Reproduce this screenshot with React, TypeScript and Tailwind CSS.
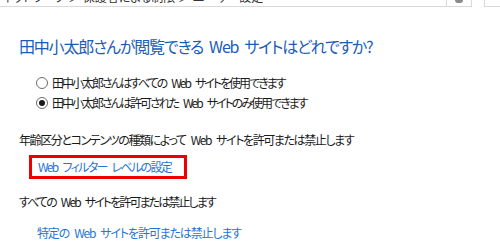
import React from 'react';

const jp = "font-['Noto_Sans_CJK_JP','Noto_Sans',sans-serif] [font-feature-settings:'palt']";

// keeps the word gaps around "Web" open while the glyphs are set tight
function Words({ text, gap = 'w-[5px]' }: { text: string; gap?: string }) {
  const parts = text.split(' ');
  return (
    <>
      {parts.map((p, i) => (
        <React.Fragment key={i}>
          {i > 0 && <span className={`inline-block ${gap}`} />}
          {p}
        </React.Fragment>
      ))}
    </>
  );
}

function Radio({ checked, label }: { checked?: boolean; label: string }) {
  return (
    <label className="flex items-center h-5 text-[12px] text-[#1a1a1a]">
      <span className="w-[12px] h-[12px] rounded-full border border-[#6b6b6b] bg-white flex items-center justify-center mr-[4px]">
        {checked && <span className="w-[6px] h-[6px] rounded-full bg-[#1a1a1a]" />}
      </span>
      <span className="leading-5 tracking-[-2px] whitespace-nowrap"><Words text={label} /></span>
    </label>
  );
}

export default function App() {
  return (
    <div className={`w-[500px] h-[250px] bg-white overflow-hidden ${jp}`}>
      {/* address bar, cut off at the top */}
      <div className="flex h-[7px]">
        <div className="w-[447px] h-[7px] border-b border-r border-[#d9d9d9] overflow-hidden">
          <div className="-mt-[11px] pl-[2px] text-[12px] leading-[16px] text-[#333] whitespace-nowrap">
            ネットワーク ＞  保護者による制限 ＞  ユーザー設定
          </div>
        </div>
        <div className="w-[25px] h-[7px] border-b border-r border-[#d9d9d9] flex justify-center">
          <span className="w-[8px] h-[3px] rounded-b-full bg-[#8a8a8a]" />
        </div>
        <div className="ml-[12px] flex-1 h-[7px] border-b border-l border-[#d9d9d9]" />
      </div>

      <div className="pl-[19px]">
        <h1 className="mt-[27px] text-[16px] leading-6 tracking-[-1.2px] text-[#1a5cb8] font-normal whitespace-nowrap">
          <Words text="田中小太郎さんが閲覧できる Web サイトはどれですか?" gap="w-[6px]" />
        </h1>

        <div className="mt-[15px] pl-[17px]">
          <Radio label="田中小太郎さんはすべての Web サイトを使用できます" />
          <Radio checked label="田中小太郎さんは許可された Web サイトのみ使用できます" />
        </div>

        <p className="mt-[17px] text-[12px] leading-5 tracking-[-1.4px] text-[#1a1a1a] whitespace-nowrap">
          <Words text="年齢区分とコンテンツの種類によって Web サイトを許可または禁止します" />
        </p>

        <div className="mt-[5px] ml-[10px] w-[158px] h-[24px] border-[3px] border-[#ee0000] flex items-center px-[6px]">
          <a className="text-[12px] leading-5 tracking-[-1.7px] text-[#2a74d0] whitespace-nowrap">
            <Words text="Web フィルター レベルの設定" />
          </a>
        </div>

        <p className="mt-[13px] text-[12px] leading-5 tracking-[-1.9px] text-[#1a1a1a] whitespace-nowrap">
          <Words text="すべての Web サイトを許可または禁止します" />
        </p>

        <a className="block mt-[11px] ml-[18px] text-[12px] leading-5 tracking-[-1.15px] text-[#2a74d0] whitespace-nowrap">
          <Words text="特定の Web サイトを許可または禁止します" />
        </a>
      </div>
    </div>
  );
}
